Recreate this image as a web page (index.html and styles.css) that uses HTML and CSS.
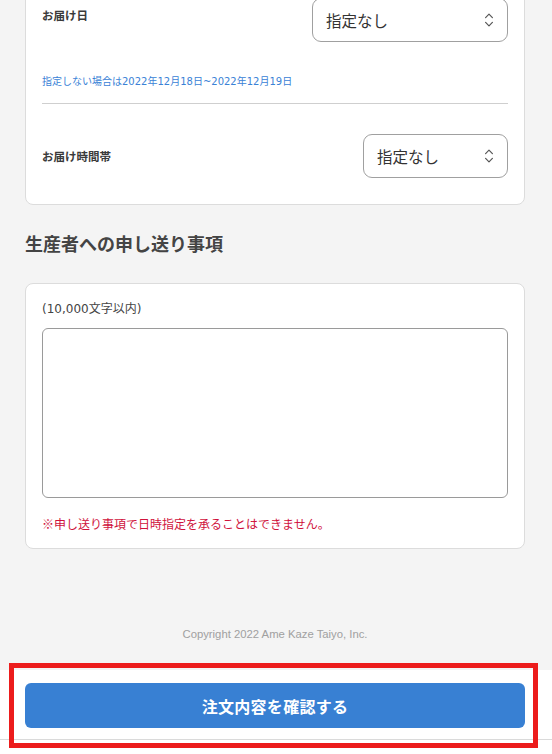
FILE: index.html
```html
<!DOCTYPE html>
<html lang="ja">
<head>
<meta charset="utf-8">
<title>注文</title>
<link rel="stylesheet" href="styles.css">
</head>
<body>
<div class="page">
  <main class="content">
    <section class="card delivery">
      <div class="row row-top">
        <div class="label">お届け日</div>
        <div class="select select-wide">
          <span>指定なし</span>
          <svg class="chev" width="10" height="16" viewBox="0 0 10 16"><path d="M1.6 5.6 L5 2.2 L8.4 5.6 M1.6 10.4 L5 13.8 L8.4 10.4" fill="none" stroke="#555" stroke-width="1.2" stroke-linecap="round" stroke-linejoin="round"/></svg>
        </div>
      </div>
      <p class="note-blue">指定しない場合は2022年12月18日~2022年12月19日</p>
      <hr class="divider">
      <div class="row row-center">
        <div class="label">お届け時間帯</div>
        <div class="select select-narrow">
          <span>指定なし</span>
          <svg class="chev" width="10" height="16" viewBox="0 0 10 16"><path d="M1.6 5.6 L5 2.2 L8.4 5.6 M1.6 10.4 L5 13.8 L8.4 10.4" fill="none" stroke="#555" stroke-width="1.2" stroke-linecap="round" stroke-linejoin="round"/></svg>
        </div>
      </div>
    </section>

    <h2 class="heading">生産者への申し送り事項</h2>

    <section class="card message">
      <div class="hint">(10,000文字以内)</div>
      <textarea class="textarea"></textarea>
      <p class="note-red">※申し送り事項で日時指定を承ることはできません。</p>
    </section>

    <p class="copyright">Copyright 2022 Ame Kaze Taiyo, Inc.</p>
  </main>

  <footer class="footer">
    <button class="confirm">注文内容を確認する</button>
    <div class="footer-rule"></div>
  </footer>

  <div class="highlight"></div>
</div>
</body>
</html>
```

FILE: styles.css
```css
html, body {
  margin: 0;
  padding: 0;
}
body {
  background: #ffffff;
  font-family: "Noto Sans CJK JP", "Liberation Sans", sans-serif;
  color: #333;
  height: 754px;
  overflow: hidden;
}
.page {
  position: relative;
  display: flow-root;
  height: 754px;
}
.content {
  background: #f4f4f4;
  padding: 0 27px 29px 25px;
  margin-top: -20px;
}
.card {
  background: #fff;
  border: 1px solid #dcdcdc;
  border-radius: 8px;
  padding: 17px 16px 26px 16px;
}
.row {
  display: flex;
  justify-content: space-between;
}
.row-top {
  align-items: flex-start;
}
.row-top .label {
  margin-top: 8px;
}
.row-center {
  align-items: center;
  margin-top: 30px;
}
.label {
  font-size: 11.5px;
  line-height: 18px;
  font-weight: bold;
  color: #3a3a3a;
}
.select {
  box-sizing: border-box;
  height: 44px;
  border: 1px solid #a0a0a0;
  border-radius: 9px;
  background: #fff;
  display: flex;
  align-items: center;
  justify-content: space-between;
  padding: 0 13px 0 13px;
  font-size: 15.5px;
  color: #333;
}
.select-wide {
  width: 196px;
}
.select-narrow {
  width: 145px;
}
.chev {
  display: block;
}
.note-blue {
  margin: 33px 0 0 0;
  font-family: "DejaVu Sans", "Noto Sans CJK JP", sans-serif;
  font-size: 10px;
  line-height: 14px;
  color: #3a82d6;
}
.divider {
  border: 0;
  border-top: 1px solid #cfcfcf;
  margin: 14px 0 0 0;
  height: 0;
}
.heading {
  margin: 25px 0 27px 0;
  font-size: 18px;
  line-height: 26px;
  font-weight: bold;
  color: #444;
}
.card.message {
  padding: 16px 16px 15px 16px;
}
.hint {
  font-family: "DejaVu Sans", "Noto Sans CJK JP", sans-serif;
  font-size: 12px;
  line-height: 18px;
  color: #444;
}
.textarea {
  display: block;
  box-sizing: border-box;
  width: 100%;
  height: 170px;
  margin-top: 10px;
  border: 1px solid #9a9a9a;
  border-radius: 6px;
  resize: none;
  background: #fff;
  font-family: inherit;
}
.note-red {
  margin: 17px 0 0 0;
  font-size: 12px;
  line-height: 18px;
  color: #d0123c;
}
.copyright {
  margin: 78px 0 0 0;
  text-align: center;
  font-family: "Liberation Sans", "Noto Sans CJK JP", sans-serif;
  font-size: 11.3px;
  line-height: 14px;
  color: #a0a0a0;
}
.footer {
  background: #fff;
  padding: 13px 27px 0 25px;
}
.confirm {
  display: block;
  width: 100%;
  height: 45px;
  border: 0;
  border-radius: 6px;
  background: #3880d3;
  color: #fff;
  font-family: "Noto Sans CJK JP", sans-serif;
  font-size: 16px;
  font-weight: bold;
  letter-spacing: 0.3px;
}
.footer-rule {
  margin: 11px -27px 0 -25px;
  border-top: 1px solid #dadada;
  height: 15px;
}
.highlight {
  position: absolute;
  left: 9px;
  top: 663px;
  width: 519px;
  height: 75px;
  border: 5px solid #ec1c1c;
}
```
